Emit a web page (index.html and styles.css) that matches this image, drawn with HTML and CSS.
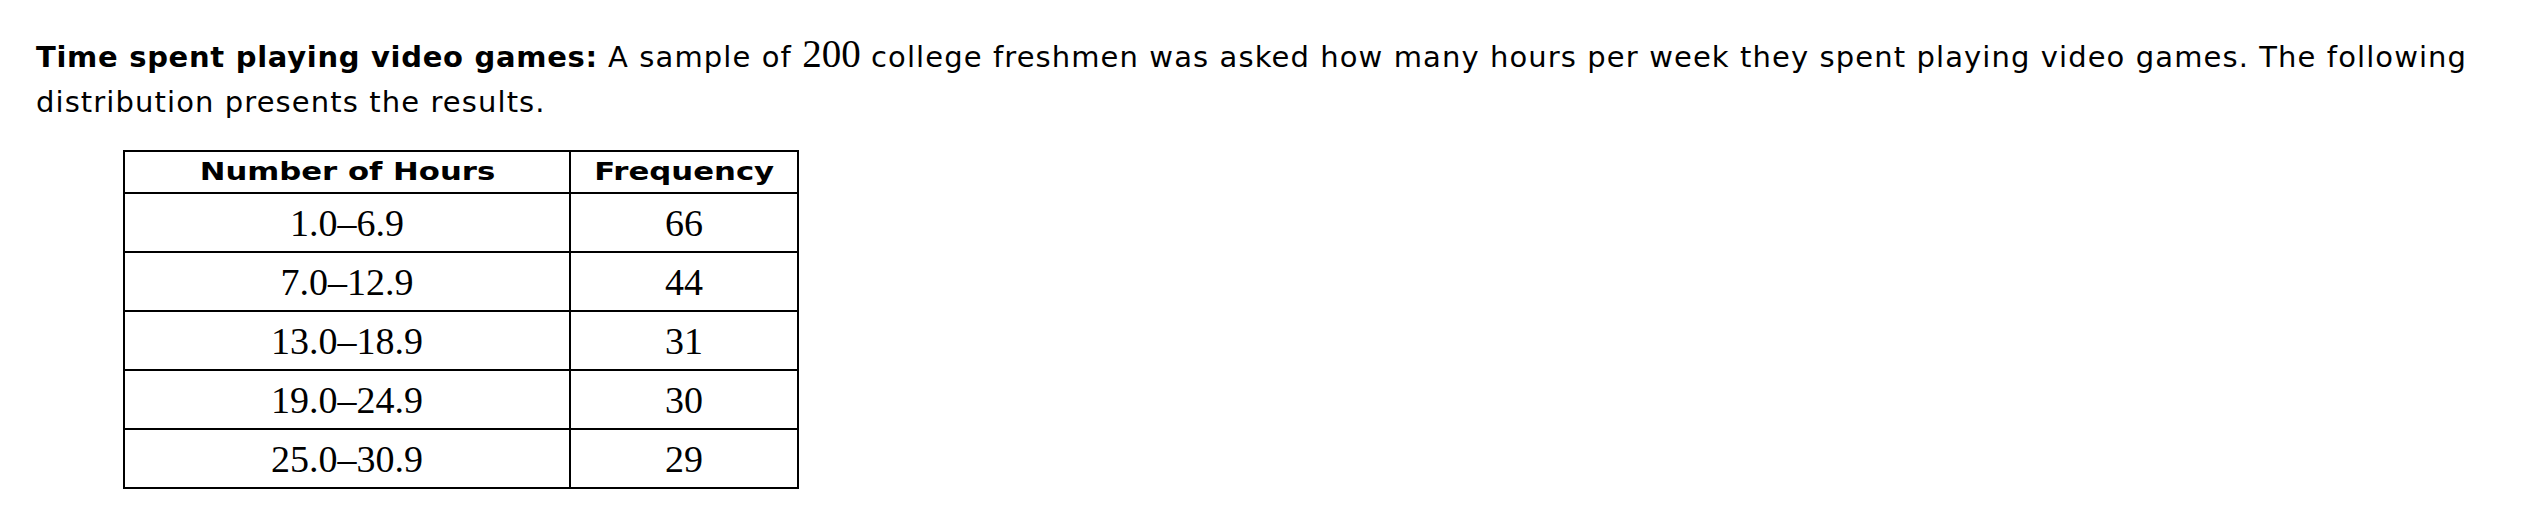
FILE: index.html
```html
<!DOCTYPE html>
<html>
<head>
<meta charset="utf-8">
<link rel="stylesheet" href="styles.css">
</head>
<body>
<div class="page">
  <p class="intro"><strong>Time spent playing video games:</strong> A sample of <span class="num">200</span> college freshmen was asked how many hours per week they spent playing video games. The following distribution presents the results.</p>
  <table class="freq">
    <thead>
      <tr><th class="col-hours"><span class="wide">Number of Hours</span></th><th class="col-freq"><span class="wide">Frequency</span></th></tr>
    </thead>
    <tbody>
      <tr><td>1.0–6.9</td><td>66</td></tr>
      <tr><td>7.0–12.9</td><td>44</td></tr>
      <tr><td>13.0–18.9</td><td>31</td></tr>
      <tr><td>19.0–24.9</td><td>30</td></tr>
      <tr><td>25.0–30.9</td><td>29</td></tr>
    </tbody>
  </table>
</div>
</body>
</html>
```
FILE: styles.css
```css
html, body {
  margin: 0;
  padding: 0;
  background: #ffffff;
}
.page {
  padding: 35px 36px 0 36px;
  color: #000;
}
.intro {
  margin: 0;
  font-family: "DejaVu Sans", Verdana, sans-serif;
  font-size: 29px;
  letter-spacing: 1.1px;
  line-height: 45px;
  max-width: 2450px;
}
.intro strong {
  font-weight: bold;
  letter-spacing: 0.7px;
}
.num {
  font-family: "Liberation Serif", "Times New Roman", serif;
  font-size: 39px;
  line-height: 38px;
  letter-spacing: 0;
}
.freq {
  margin: 25px 0 0 87px;
  border-collapse: collapse;
  border: 2px solid #000;
}
.freq th, .freq td {
  border: 2px solid #000;
  text-align: center;
  padding: 0;
}
.freq th {
  font-family: "DejaVu Sans", Verdana, sans-serif;
  font-weight: bold;
  font-size: 24px;
  height: 40px;
}
.wide {
  display: inline-block;
  transform: scaleX(1.28);
}
.freq td {
  font-family: "Liberation Serif", "Times New Roman", serif;
  font-size: 38px;
  height: 57px;
}
.col-hours { width: 444px; }
.col-freq { width: 226px; }
```
